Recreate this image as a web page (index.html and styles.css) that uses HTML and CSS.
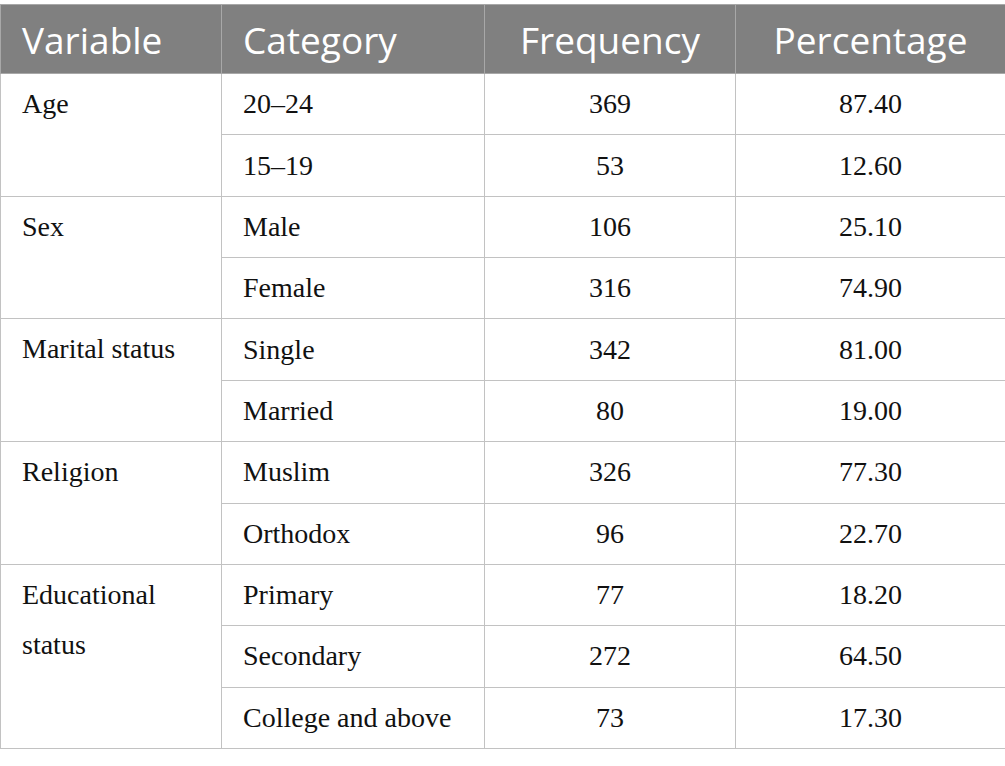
FILE: index.html
```html
<!DOCTYPE html>
<html lang="en">
<head>
    <meta charset="UTF-8">
    <meta name="viewport" content="width=device-width, initial-scale=1.0">
    <title>Participant characteristics</title>
    <link rel="stylesheet" href="styles.css">
</head>
<body>
    <table class="data-table">
        <colgroup>
            <col class="col-var">
            <col class="col-cat">
            <col class="col-freq">
            <col class="col-pct">
        </colgroup>
        <thead>
            <tr>
                <th>Variable</th>
                <th>Category</th>
                <th class="num">Frequency</th>
                <th class="num">Percentage</th>
            </tr>
        </thead>
        <tbody>
            <tr>
                <td rowspan="2" class="var">Age</td>
                <td>20–24</td>
                <td class="num">369</td>
                <td class="num">87.40</td>
            </tr>
            <tr>
                <td>15–19</td>
                <td class="num">53</td>
                <td class="num">12.60</td>
            </tr>
            <tr>
                <td rowspan="2" class="var">Sex</td>
                <td>Male</td>
                <td class="num">106</td>
                <td class="num">25.10</td>
            </tr>
            <tr>
                <td>Female</td>
                <td class="num">316</td>
                <td class="num">74.90</td>
            </tr>
            <tr>
                <td rowspan="2" class="var">Marital status</td>
                <td>Single</td>
                <td class="num">342</td>
                <td class="num">81.00</td>
            </tr>
            <tr>
                <td>Married</td>
                <td class="num">80</td>
                <td class="num">19.00</td>
            </tr>
            <tr>
                <td rowspan="2" class="var">Religion</td>
                <td>Muslim</td>
                <td class="num">326</td>
                <td class="num">77.30</td>
            </tr>
            <tr>
                <td>Orthodox</td>
                <td class="num">96</td>
                <td class="num">22.70</td>
            </tr>
            <tr>
                <td rowspan="3" class="var">Educational<br>status</td>
                <td>Primary</td>
                <td class="num">77</td>
                <td class="num">18.20</td>
            </tr>
            <tr>
                <td>Secondary</td>
                <td class="num">272</td>
                <td class="num">64.50</td>
            </tr>
            <tr>
                <td>College and above</td>
                <td class="num">73</td>
                <td class="num">17.30</td>
            </tr>
        </tbody>
    </table>
</body>
</html>
```

FILE: styles.css
```css
body {
    margin: 0;
    padding: 4px 0 0 0;
    background: #ffffff;
}
.data-table {
    width: 1005px;
    border-collapse: collapse;
    table-layout: fixed;
    font-family: "Liberation Serif", serif;
    font-size: 28px;
    color: #111111;
}
.col-var { width: 221px; }
.col-cat { width: 263px; }
.col-freq { width: 251px; }
.col-pct { width: 270px; }
.data-table th, .data-table td {
    border: 1px solid #c2c2c2;
    text-align: left;
    padding: 0 0 0 21px;
}
.data-table th {
    background-color: #808080;
    color: #ffffff;
    font-family: "Open Sans", sans-serif;
    font-weight: normal;
    font-size: 37px;
    height: 68px;
    border-color: #a8a8a8;
}
.data-table tbody tr {
    height: 61.36px;
}
.data-table td {
    line-height: 50px;
}
.data-table td.var {
    vertical-align: top;
    padding-top: 5px;
}
.data-table .num {
    text-align: center;
    padding: 0;
}
```
